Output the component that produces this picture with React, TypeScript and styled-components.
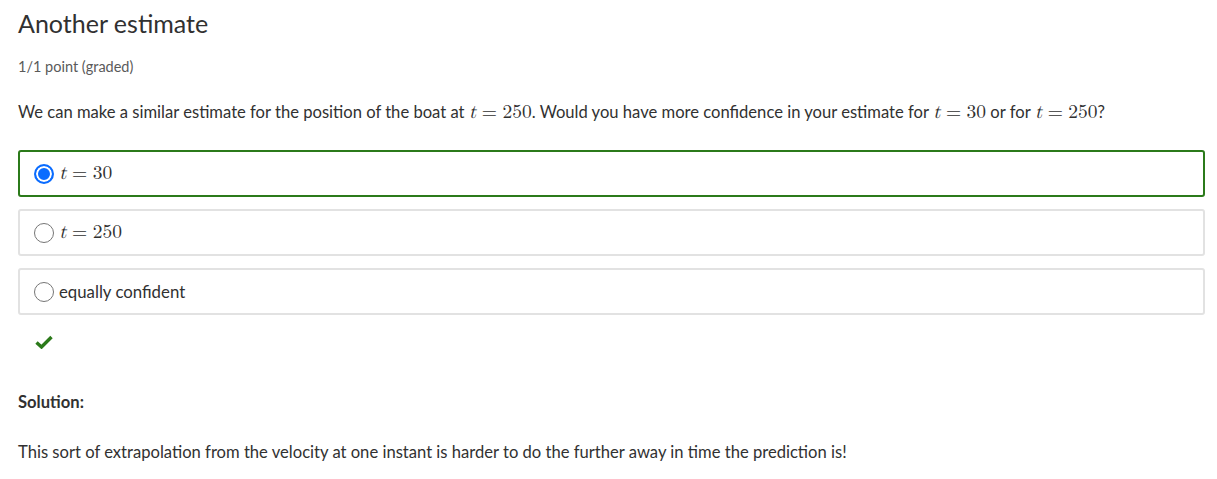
import React from "react";
import styled, { createGlobalStyle } from "styled-components";

const Global = createGlobalStyle`
  html, body { margin: 0; padding: 0; background: #fff; }
  body { font-family: "Source Sans Pro", Lato, "Noto Sans", sans-serif; color: #313131; }
`;

const Page = styled.div`
  padding: 6px 12px 0 18px;
`;

const Title = styled.h2`
  margin: 0;
  font-size: 25px;
  font-weight: 400;
  line-height: 34px;
  color: #313131;
`;

const Points = styled.div`
  margin-top: 18px;
  font-size: 14.5px;
  line-height: 18px;
  color: #5a5a5a;
`;

const Prompt = styled.p`
  margin: 24px 0 0;
  font-size: 16.6px;
  line-height: 24px;
  color: #313131;
`;

const Math = styled.span`
  font-family: "Latin Modern Math", "Liberation Serif", "DejaVu Serif", serif;
  font-size: 19.5px;
  line-height: 1;
  white-space: nowrap;
`;

const Var = styled.i`
  font-style: italic;
`;

const Rel = styled.span`
  margin: 0 0.28em;
`;

const Options = styled.div`
  margin-top: 26px;
  display: flex;
  flex-direction: column;
  gap: 12px;
`;

const Option = styled.label<{ $correct?: boolean }>`
  display: flex;
  align-items: center;
  gap: 5px;
  height: 47px;
  box-sizing: border-box;
  padding: 0 14px;
  border: 2px solid ${(p) => (p.$correct ? "#2b7a1a" : "#e2e2e2")};
  border-radius: 3px;
  font-size: 16.8px;
  color: #313131;
`;

const Radio = styled.span<{ $checked?: boolean }>`
  width: 20px;
  height: 20px;
  box-sizing: border-box;
  border-radius: 50%;
  flex: none;
  border: ${(p) => (p.$checked ? "2px solid #0a6cff" : "1px solid #767676")};
  background: ${(p) => (p.$checked ? "#0a6cff" : "#fff")};
  box-shadow: ${(p) => (p.$checked ? "inset 0 0 0 2px #fff" : "none")};
`;

const Check = styled.div`
  margin: 17px 0 0 17px;
  height: 20px;
  display: flex;
  align-items: center;
`;

const SolutionLabel = styled.div`
  margin-top: 38px;
  font-size: 16.6px;
  font-weight: 700;
  line-height: 24px;
  color: #313131;
`;

const SolutionText = styled.p`
  margin: 26px 0 0;
  font-size: 16.6px;
  line-height: 24px;
  color: #313131;
`;

const Eq = ({ v }: { v: string }) => (
  <Math>
    <Var>t</Var>
    <Rel>=</Rel>
    {v}
  </Math>
);

export default function App() {
  return (
    <>
      <Global />
      <Page>
        <Title>Another estimate</Title>
        <Points>1/1 point (graded)</Points>
        <Prompt>
          We can make a similar estimate for the position of the boat at <Eq v="250" />. Would you have more
          confidence in your estimate for <Eq v="30" /> or for <Eq v="250" />?
        </Prompt>
        <Options>
          <Option $correct>
            <Radio $checked />
            <Eq v="30" />
          </Option>
          <Option>
            <Radio />
            <Eq v="250" />
          </Option>
          <Option>
            <Radio />
            equally confident
          </Option>
        </Options>
        <Check>
          <svg width="18" height="14" viewBox="0 0 18 14">
            <path d="M1.5 7.5 L6.5 12 L16.5 2" fill="none" stroke="#2b7a1a" strokeWidth="3.4" />
          </svg>
        </Check>
        <SolutionLabel>Solution:</SolutionLabel>
        <SolutionText>
          This sort of extrapolation from the velocity at one instant is harder to do the further away in time the
          prediction is!
        </SolutionText>
      </Page>
    </>
  );
}
